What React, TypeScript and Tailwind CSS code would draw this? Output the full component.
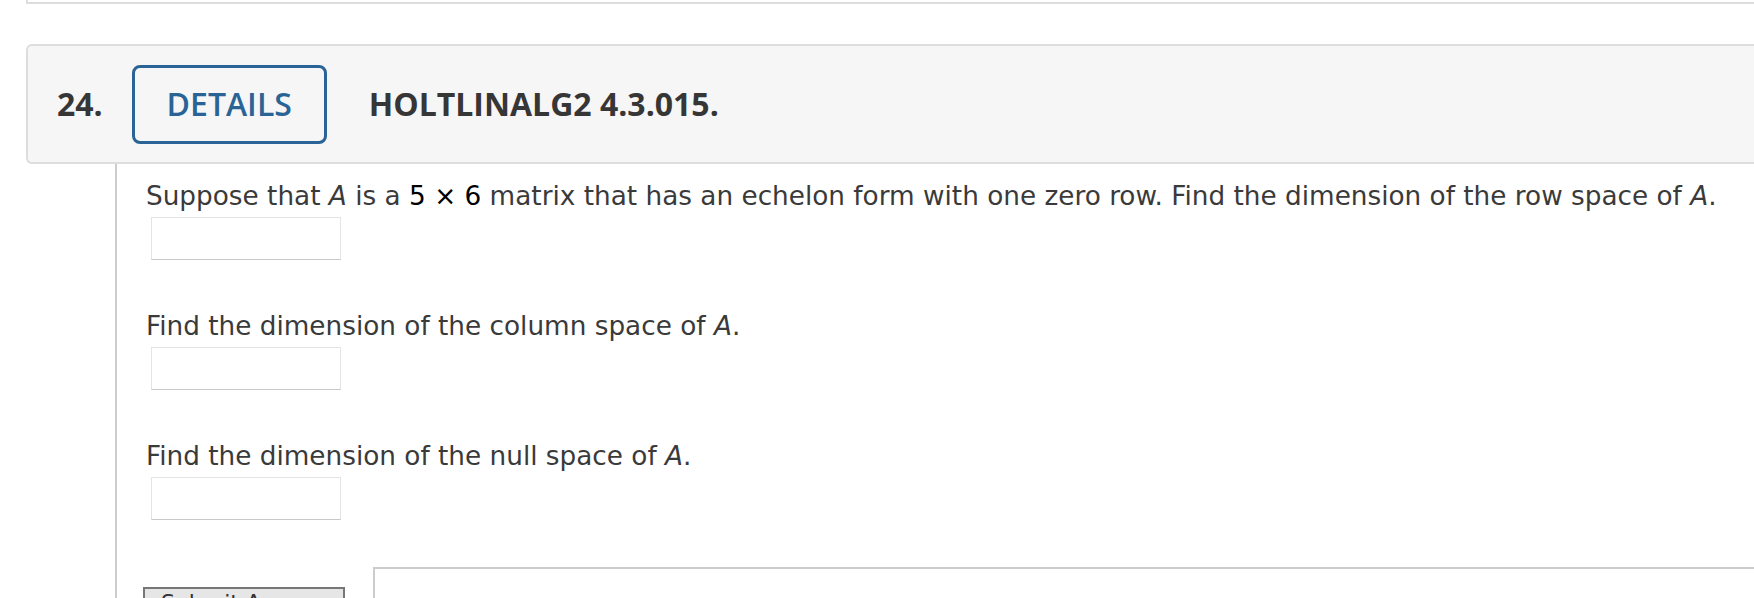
import React from "react";

const bodyFont = { fontFamily: '"DejaVu Sans", Verdana, sans-serif' };

function AnswerBox() {
  return (
    <div className="ml-[8px] mt-[3px] h-[43px] w-[190px] border border-[#e4e4e4] border-b-[#c8c8c8] bg-white" />
  );
}

export default function App() {
  return (
    <div className="h-[598px] w-full overflow-hidden bg-white">
      {/* previous question panel bottom edge */}
      <div className="ml-[26px] h-[4px] border-b-2 border-l-2 border-[#dddddd]" />

      {/* question header card */}
      <div
        className="ml-[26px] mt-[40px] flex h-[120px] items-center rounded-l-[6px] border-2 border-r-0 border-[#dddddd] bg-[#f6f6f6] pl-[29px] text-[32px] text-[#363636]"
        style={{ fontFamily: '"Open Sans", Arial, sans-serif' }}
      >
        <span className="font-bold">24.</span>
        <div className="ml-[29px] flex h-[79px] w-[195px] items-center justify-center rounded-[8px] border-[3px] border-[#2a6496] font-semibold text-[#2a6496]">
          DETAILS
        </div>
        <span className="ml-[42px] font-bold">HOLTLINALG2 4.3.015.</span>
      </div>

      {/* question body */}
      <div
        className="ml-[115px] h-[440px] border-l-2 border-[#cccccc] pl-[26px] pt-[14px] text-[26.3px] leading-[36px] text-[#3a3a3a]"
        style={bodyFont}
      >
        <p className="pl-[3px] whitespace-nowrap">
          Suppose that <i>A</i> is a <span className="text-black">5 × 6</span> matrix that has an echelon form with one zero row. Find the dimension of the row space of <i>A</i>.
        </p>
        <AnswerBox />

        <p className="mt-[48px] pl-[3px]">
          Find the dimension of the column space of <i>A</i>.
        </p>
        <AnswerBox />

        <p className="mt-[48px] pl-[3px]">
          Find the dimension of the null space of <i>A</i>.
        </p>
        <AnswerBox />

        <div className="mt-[47px] flex items-start">
          <button className="mt-[20px] flex h-[50px] w-[202px] items-start justify-center border-2 border-[#777777] bg-[#e6e6e6] pt-[1px] text-[22px] leading-[26px] text-[#333]">
            <span>Submit Answer</span>
          </button>
          <div className="ml-[28px] h-[100px] flex-1 border-2 border-r-0 border-[#cccccc] bg-white" />
        </div>
      </div>
    </div>
  );
}
